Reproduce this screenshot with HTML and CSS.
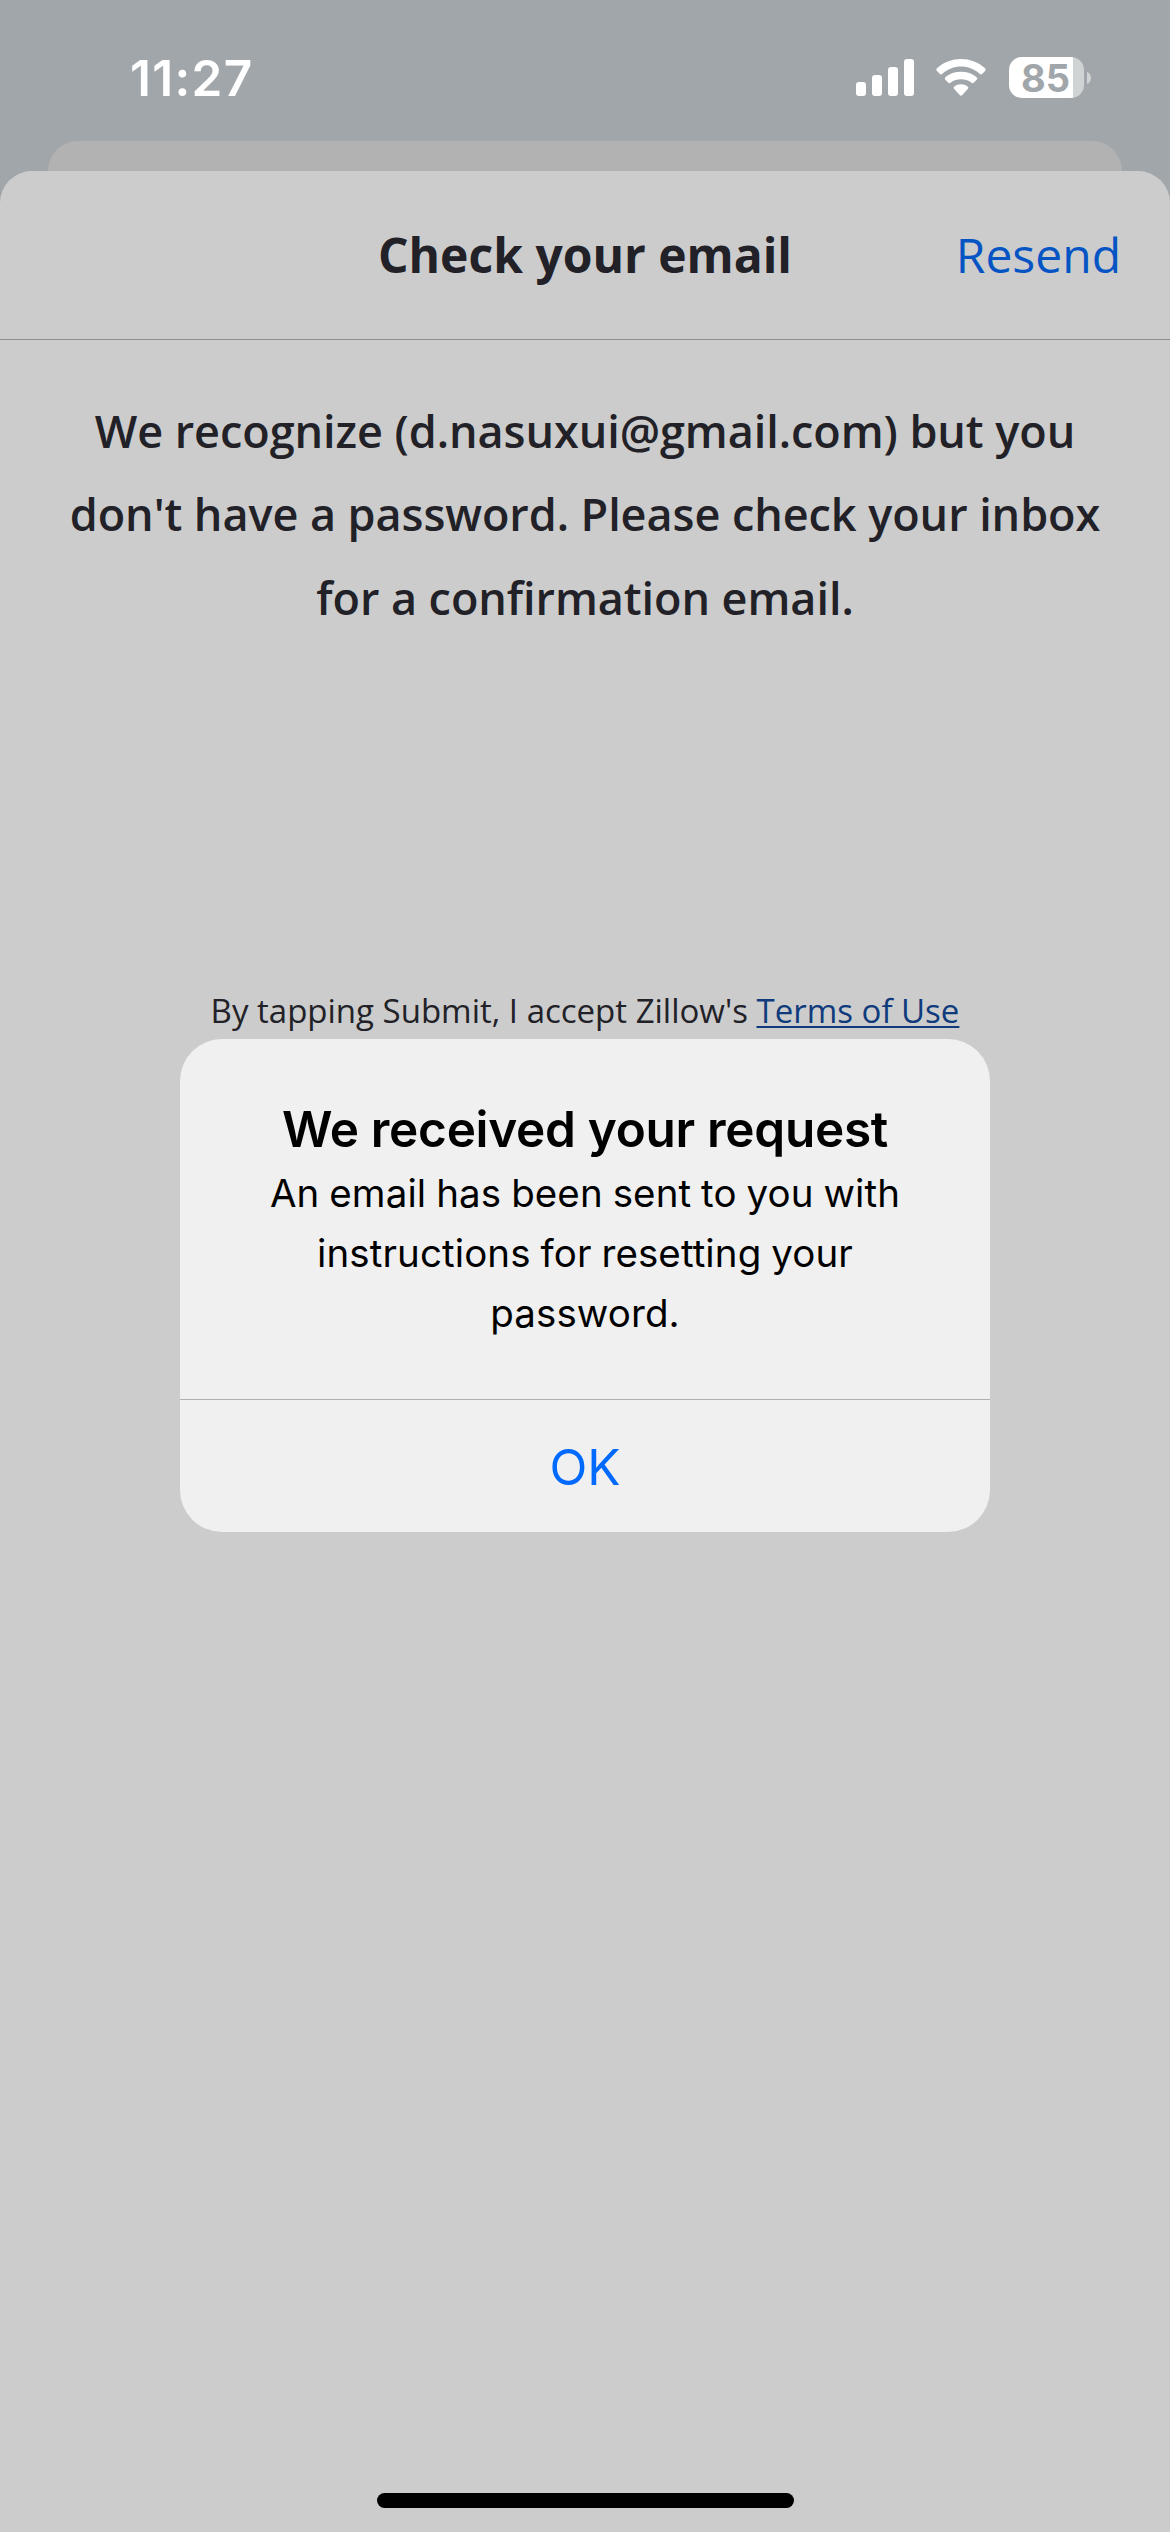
FILE: index.html
```html
<!DOCTYPE html>
<html lang="en">
<head>
<meta charset="utf-8">
<title>Check your email</title>
<link rel="stylesheet" href="styles.css">
</head>
<body>
<div class="screen">
  <div class="status-bar">
    <div class="time">11:27</div>
    <div class="indicators">
      <svg class="signal" width="58" height="37" viewBox="0 0 58 37" fill="#fff">
        <rect x="0" y="23" width="10" height="14" rx="3"/>
        <rect x="16" y="16" width="10" height="21" rx="3"/>
        <rect x="32" y="8" width="10" height="29" rx="3"/>
        <rect x="48" y="0" width="10" height="37" rx="3"/>
      </svg>
      <svg class="wifi" width="50" height="37" viewBox="0 0 50 37" fill="#fff">
        <path d="M1 9.300C7.300 3.400 15.800 0 25 0S42.700 3.400 49 9.300Q50.300 10.700 49 12L46.300 14.800Q45 16 43.600 14.800C38.600 10.300 32.100 7.600 25 7.600S11.400 10.300 6.400 14.800Q5 16 3.700 14.800L1 12Q-.3 10.700 1 9.300Z"/>
        <path d="M9.600 18C13.700 14.600 19 12.800 25 12.800S36.300 14.600 40.400 18Q42 19.400 40.700 20.800L37.900 23.600Q36.700 24.800 35.200 23.600C32.400 21.400 28.900 20.300 25 20.300S17.600 21.400 14.800 23.600Q13.300 24.800 12.100 23.600L9.300 20.800Q8 19.400 9.600 18Z"/>
        <path d="M18.400 27.400C20.200 26 22.500 25.300 25 25.300S29.800 26 31.600 27.400Q33.100 28.700 31.800 30L26.300 36Q25 37.400 23.700 36L18.200 30Q16.900 28.700 18.400 27.400Z"/>
      </svg>
      <div class="battery">
        <div class="battery-body">85</div>
        <svg width="4" height="12" viewBox="0 0 4 12"><path d="M0 0C5.300 2 5.300 10 0 12Z" fill="#d0d3d4"/></svg>
      </div>
    </div>
  </div>
  <div class="back-sheet"></div>
  <div class="sheet">
    <div class="nav">
      <span></span>
      <h1>Check your email</h1>
      <a class="resend">Resend</a>
    </div>
    <p class="message">We recognize (d.nasuxui@gmail.com) but you<br>don't have a password. Please check your inbox<br>for a confirmation email.</p>
    <p class="terms">By tapping Submit, I accept Zillow's <a>Terms of Use</a></p>
    <div class="home"></div>
  </div>
  <div class="alert">
    <div class="alert-text">
      <h2>We received your request</h2>
      <p>An email has been sent to you with<br>instructions for resetting your<br>password.</p>
    </div>
    <button>OK</button>
  </div>
</div>
</body>
</html>
```
FILE: styles.css
```css
* { box-sizing: border-box; margin: 0; padding: 0; }
body { background: #a1a6aa; }
.screen {
  position: relative;
  display: flex;
  flex-direction: column;
  width: 1170px;
  height: 2532px;
  overflow: hidden;
  background: #a1a6aa;
  font-family: "Open Sans", "Noto Sans", sans-serif;
  color: #212127;
}
.status-bar {
  display: flex;
  justify-content: space-between;
  height: 141px;
  padding: 48px 79px 0 130px;
  font-family: Inter, sans-serif;
  color: #fff;
}
.time { font-size: 49.5px; font-weight: 600; line-height: 60px; letter-spacing: 1.3px; }
.indicators { display: flex; align-items: flex-start; padding-top: 9px; }
.signal { margin: 2px 22px 0 0; }
.wifi { margin: 2px 23px 0 0; }
.battery { display: flex; align-items: center; gap: 3px; }
.battery-body {
  width: 75px;
  height: 41px;
  padding-left: 12px;
  border-radius: 13px;
  background: linear-gradient(90deg, #fff 64px, #d0d3d4 64px);
  color: #a1a6aa;
  font-size: 38px;
  font-weight: 700;
  line-height: 42px;
}
.back-sheet { height: 30px; margin: 0 48px; border-radius: 30px 30px 0 0; background: #b2b2b2; }
.sheet {
  display: flex;
  flex: 1;
  flex-direction: column;
  align-items: center;
  border-radius: 32px 32px 0 0;
  background: #ccc;
}
.nav {
  display: grid;
  grid-template-columns: 1fr auto 1fr;
  align-items: center;
  width: 100%;
  height: 169px;
  padding: 0 49px;
  border-bottom: 1px solid #8f8f8f;
  line-height: 66px;
}
h1 { font-size: 48px; font-weight: 700; }
.resend { justify-self: end; color: #0554c4; font-size: 48px; }
.message {
  margin-top: 49px;
  font-size: 45px;
  font-weight: 600;
  line-height: 83.4px;
  letter-spacing: -0.06px;
  text-align: center;
  white-space: nowrap;
}
.terms { margin-top: 349px; font-size: 33px; line-height: 46px; white-space: nowrap; }
.terms a { color: #0f3b7c; text-decoration: underline; text-decoration-thickness: 2px; text-underline-offset: 3px; }
.home { width: 417px; height: 15px; margin: auto 0 24px 1px; border-radius: 8px; background: #000; }
.alert {
  position: absolute;
  top: 1039px;
  left: 180px;
  display: flex;
  flex-direction: column;
  width: 810px;
  height: 493px;
  border-radius: 42px;
  background: #f0f0f0;
  color: #000;
  font-family: Inter, sans-serif;
  text-align: center;
  white-space: nowrap;
}
.alert-text { height: 360px; padding-top: 60px; }
h2 { font-size: 49.5px; font-weight: 600; line-height: 60px; letter-spacing: -0.3px; }
.alert p { margin-top: 4px; font-size: 38.5px; line-height: 60px; letter-spacing: 0.1px; word-spacing: -1px; }
button {
  flex: 1;
  padding-top: 2px;
  border: 0;
  border-top: 1px solid #b0b0b0;
  background: none;
  color: #006aff;
  font: 400 49.5px/60px Inter, sans-serif;
}
```
